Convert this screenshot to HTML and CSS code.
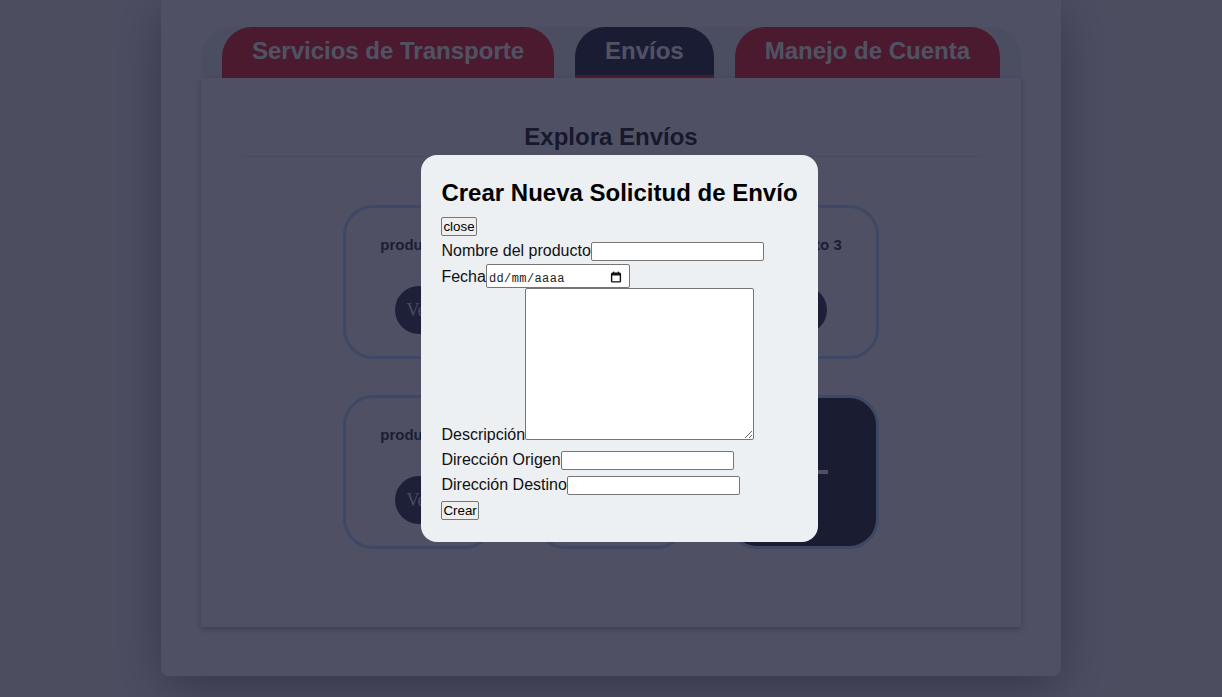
FILE: index.html
```html
<!DOCTYPE html>
<html lang="es">
<head>
<meta charset="utf-8">
<title>Envíos</title>
<link rel="stylesheet" href="styles.css">
</head>
<body>
<main class="container">
  <nav class="tabs">
    <div class="tab">Servicios de Transporte</div>
    <div class="tab active">Envíos</div>
    <div class="tab">Manejo de Cuenta</div>
  </nav>
  <section class="panel">
    <h2 class="panel-title">Explora Envíos</h2>
    <div class="cards">
      <div class="card"><h4 class="card-title">producto 1</h4><button class="card-btn">Ver</button></div>
      <div class="card"><h4 class="card-title">producto 2</h4><button class="card-btn">Ver</button></div>
      <div class="card"><h4 class="card-title">producto 3</h4><button class="card-btn">Ver</button></div>
      <div class="card"><h4 class="card-title">producto 4</h4><button class="card-btn">Ver</button></div>
      <div class="card"><h4 class="card-title">producto 5</h4><button class="card-btn">Ver</button></div>
      <div class="card card-add"><span class="plus"></span></div>
    </div>
  </section>
</main>

<div class="overlay">
  <div class="modal">
    <h2 class="modal-title">Crear Nueva Solicitud de Envío</h2>
    <div class="row row-close"><button class="btn" type="button">close</button></div>
    <form class="modal-form">
      <div class="row row-nombre"><label>Nombre del producto</label><input class="text-input" type="text"></div>
      <div class="row row-fecha"><label>Fecha</label><span class="date-input"><span class="date-text">dd/mm/aaaa</span><svg class="cal" width="12" height="12" viewBox="0 0 12 12"><rect x="1.6" y="2.1" width="8.8" height="8.8" rx="0.8" fill="none" stroke="#111" stroke-width="1.4"/><rect x="1.6" y="2.1" width="8.8" height="2.4" fill="#111"/><rect x="3" y="0.6" width="1.3" height="2" fill="#111"/><rect x="7.7" y="0.6" width="1.3" height="2" fill="#111"/></svg></span></div>
      <div class="row row-desc"><label>Descripción</label><textarea class="textarea"></textarea></div>
      <div class="row row-origen"><label>Dirección Origen</label><input class="text-input" type="text"></div>
      <div class="row row-destino"><label>Dirección Destino</label><input class="text-input" type="text"></div>
      <div class="row row-crear"><button class="btn" type="button">Crear</button></div>
    </form>
  </div>
</div>
</body>
</html>
```
FILE: styles.css
```css
* {
  margin: 0;
  padding: 0;
  box-sizing: border-box;
}

html, body {
  height: 100%;
}

body {
  font-family: "Liberation Sans", Arial, sans-serif;
  font-size: 16px;
  background: #dfe1ec;
  overflow: hidden;
}

/* ---------- page ---------- */
.container {
  width: 900px;
  margin: 0 auto;
  padding: 27px 40px 49px;
  background: #ebecf6;
  border-radius: 0 0 8px 8px;
  box-shadow: 0 12px 50px rgba(20, 20, 40, 0.45);
}

.tabs {
  display: flex;
  justify-content: space-evenly;
  align-items: flex-end;
  height: 51px;
  background: #dbe1ed;
  border-radius: 30px 30px 0 0;
}

.tab {
  height: 51px;
  padding: 10px 30px 0;
  border-radius: 30px 30px 0 0;
  background: #db142a;
  color: #eff4fa;
  font-size: 24px;
  font-weight: 700;
  white-space: nowrap;
}

.tab.active {
  background: #171c36;
  border-bottom: 3px solid #db142a;
}

.panel {
  height: 549px;
  padding-top: 45px;
  background: #e9ebf5;
  box-shadow: 0 2px 6px rgba(0, 0, 0, 0.35);
}

.panel-title {
  margin: 0 40px;
  padding-bottom: 5px;
  border-bottom: 1px solid #d3d7e3;
  text-align: center;
  font-size: 24px;
  font-weight: 700;
  color: #0c0e1c;
}

.cards {
  display: grid;
  grid-template-columns: repeat(3, 152px);
  grid-auto-rows: 154px;
  column-gap: 40px;
  row-gap: 36px;
  justify-content: center;
  margin-top: 48px;
}

.card {
  display: flex;
  flex-direction: column;
  align-items: center;
  padding-top: 28px;
  border: 3px solid #a7ccfa;
  border-radius: 30px;
}

.card-title {
  font-size: 15px;
  line-height: 17px;
  font-weight: 700;
  color: #20243a;
}

.card-btn {
  width: 48px;
  height: 48px;
  margin-top: 33px;
  border: none;
  border-radius: 50%;
  background: #272c4e;
  color: #d4d6e0;
  font-family: "Liberation Serif", "Times New Roman", serif;
  font-size: 18px;
  font-weight: 400;
  white-space: nowrap;
}

.card-add {
  justify-content: center;
  padding-top: 0;
  background: #1b2034;
}

.plus {
  position: relative;
  width: 50px;
  height: 50px;
}

.plus::before,
.plus::after {
  content: "";
  position: absolute;
  background: #f0f0f4;
}

.plus::before {
  left: 0;
  top: 23px;
  width: 50px;
  height: 4px;
}

.plus::after {
  left: 23px;
  top: 0;
  width: 4px;
  height: 50px;
}

/* ---------- modal ---------- */
.overlay {
  position: fixed;
  inset: 0;
  display: flex;
  align-items: center;
  justify-content: center;
  padding-left: 17px;
  background: rgba(27, 28, 50, 0.75);
}

.modal {
  padding: 24px 20px 22px;
  background: #ecf0f3;
  border-radius: 16px;
  color: #111;
}

.modal-title {
  margin-bottom: 10px;
  font-size: 24px;
  font-weight: 700;
  color: #000;
  white-space: nowrap;
}

.row {
  line-height: normal;
}

.row label {
  font-size: 16px;
  color: #111;
}

.row-nombre { margin-top: 6px; }
.row-fecha { margin-top: 3px; }
.row-desc { margin-top: 0; }
.row-origen { margin-top: 7px; }
.row-destino { margin-top: 6px; }
.row-crear { margin-top: 6px; }

.btn {
  padding: 0 1px;
  height: 19px;
  border: 1px solid #767676;
  border-radius: 2px;
  background: #efefef;
  color: #000;
  font-family: "Liberation Sans", Arial, sans-serif;
  font-size: 13.333px;
  vertical-align: baseline;
}

.text-input {
  width: 173px;
  height: 19px;
  padding: 0 2px;
  border: 1px solid #767676;
  border-radius: 2px;
  background: #fff;
  font-family: "Liberation Sans", Arial, sans-serif;
  font-size: 13.333px;
  vertical-align: baseline;
}

.date-input {
  display: inline-flex;
  align-items: baseline;
  justify-content: space-between;
  width: 144px;
  height: 24px;
  padding: 7px 7px 0 2px;
  border: 1px solid #767676;
  border-radius: 2px;
  background: #fff;
  vertical-align: baseline;
}

.date-text {
  font-family: "Liberation Mono", "DejaVu Sans Mono", monospace;
  font-size: 12px;
  letter-spacing: 0.4px;
  color: #222;
}

.cal {
  align-self: center;
  margin-top: -6px;
}

.textarea {
  display: inline-block;
  width: 229px;
  height: 152px;
  border: 1px solid #767676;
  border-radius: 2px;
  background: #fff;
  resize: both;
  vertical-align: baseline;
}
```
